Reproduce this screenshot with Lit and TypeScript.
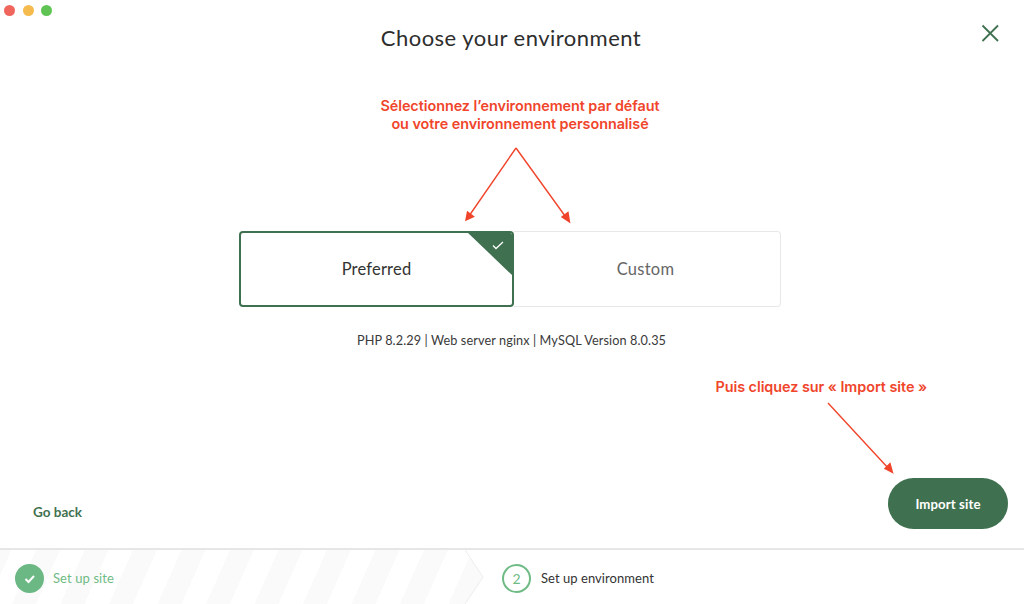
import { LitElement, html, css } from "lit";
import { customElement } from "lit/decorators.js";

@customElement("app-root")
export class AppRoot extends LitElement {
  static styles = css`
    :host {
      display: flex;
      flex-direction: column;
      width: 1024px;
      height: 604px;
      position: relative;
      overflow: hidden;
      background: #fff;
      color: #333;
      font-family: Lato, "Open Sans", sans-serif;
    }
    .lights { position: absolute; left: 4px; top: 5px; display: flex; gap: 7.5px; }
    .light { width: 11px; height: 11px; border-radius: 50%; }
    .red { background: #f0665c; }
    .yellow { background: #f6bb4f; }
    .green { background: #5fc454; }
    .close { position: absolute; left: 980px; top: 23px; width: 21px; height: 21px; }
    .arrows { position: absolute; left: 0; top: 0; width: 1024px; height: 604px; pointer-events: none; }

    main { flex: 1; display: flex; flex-direction: column; align-items: center; padding-right: 4px; min-height: 0; }
    h1 {
      margin: 24px 0 0 2px;
      font-size: 22px;
      line-height: 27px;
      font-weight: 400;
      letter-spacing: 0.48px;
      color: #2d2d2d;
    }
    .note {
      color: #f0452b;
      font-family: Inter, Lato, sans-serif;
      font-weight: 600;
      font-size: 14.4px;
      line-height: 18px;
      letter-spacing: -0.05px;
      text-align: center;
    }
    .note.top { margin: 46px 0 0 20px; }
    .cards { display: flex; margin-top: 98px; width: 542px; height: 76px; }
    .card {
      flex: 1;
      position: relative;
      display: flex;
      align-items: center;
      justify-content: center;
      box-sizing: border-box;
      font-size: 16.5px;
      letter-spacing: 0.2px;
      border-radius: 4px;
    }
    .card.on { flex: 0 0 275px; border: 2px solid #3f7150; color: #333; z-index: 1; overflow: hidden; }
    .card.off { border: 1px solid #e8e8e8; border-left: 0; color: #666; border-radius: 0 4px 4px 0; padding-right: 3px; letter-spacing: 0.25px; }
    .corner { position: absolute; right: -2px; top: -2px; width: 48px; height: 46px; }
    .info { margin: 25px 0 0 3px; font-size: 12.7px; line-height: 16px; letter-spacing: 0.1px; color: #3a3a3a; }
    .foot-note { align-self: flex-end; margin: 30px 93px 0 0; }
    .actions {
      align-self: stretch;
      margin-right: -4px;
      padding: 0 16px 0 33px;
      margin-top: 82px;
      display: flex;
      align-items: center;
      justify-content: space-between;
    }
    .back { font-size: 13.5px; font-weight: 700; color: #3f7150; padding-top: 17px; }
    .btn {
      width: 120px;
      height: 51px;
      border: 0;
      border-radius: 26px;
      background: #3f7150;
      color: #fff;
      font: 700 13.2px Lato, sans-serif;
      letter-spacing: 0.1px;
    }

    footer {
      height: 56px;
      box-sizing: border-box;
      border-top: 2px solid #e6e6e6;
      display: flex;
      position: relative;
      flex: none;
    }
    .step { display: flex; align-items: center; gap: 9px; font-size: 13px; letter-spacing: 0.1px; padding-top: 3px; box-sizing: border-box; }
    .label { padding-bottom: 2px; }
    .done {
      width: 483px;
      padding-left: 15px;
      color: #6fbb85;
      background: repeating-linear-gradient(114deg, #fafafa 0 10.5px, #fff 10.5px 32.9px, #fafafa 32.9px 44.3px);
      clip-path: polygon(0 0, 465px 0, 483px 50%, 465px 100%, 0 100%);
    }
    .chev { position: absolute; left: 465px; top: 0; width: 19px; height: 54px; }
    .num {
      width: 29px;
      height: 29px;
      box-sizing: border-box;
      border-radius: 50%;
      display: flex;
      align-items: center;
      justify-content: center;
    }
    .num.fill { background: #6bb884; }
    .num.ring { border: 2px solid #6fbb85; color: #6fbb85; font-size: 14px; }
    .current { padding-left: 19px; color: #333; gap: 10px; letter-spacing: 0.05px; }
  `;

  render() {
    return html`
      <div class="lights">
        <span class="light red"></span><span class="light yellow"></span><span class="light green"></span>
      </div>
      <svg class="close" viewBox="0 0 21 21" fill="none" stroke="#3f7150" stroke-width="1.8">
        <path d="M2.500 2.500 18 18M18 2.500 2.500 18" />
      </svg>
      <main>
        <h1>Choose your environment</h1>
        <div class="note top">Sélectionnez l’environnement par défaut<br />ou votre environnement personnalisé</div>
        <div class="cards">
          <div class="card on">
            Preferred
            <svg class="corner" viewBox="0 0 48 46">
              <path d="M0 0H45Q48 0 48 3V46Z" fill="#3f7150" />
              <path d="M27 14.500 30 17.500 37 11" fill="none" stroke="#fff" stroke-width="1.300" />
            </svg>
          </div>
          <div class="card off">Custom</div>
        </div>
        <div class="info">PHP 8.2.29 | Web server nginx | MySQL Version 8.0.35</div>
        <div class="note foot-note">Puis cliquez sur « Import site »</div>
        <div class="actions">
          <span class="back">Go back</span>
          <button class="btn">Import site</button>
        </div>
      </main>
      <footer>
        <div class="step done">
          <span class="num fill">
            <svg width="12" height="10" viewBox="0 0 12 10" fill="none" stroke="#fff" stroke-width="2">
              <path d="M1.500 5 4.500 8 10 2" />
            </svg>
          </span>
          <span class="label">Set up site</span>
        </div>
        <svg class="chev" viewBox="0 0 19 54" fill="none" stroke="#ececec">
          <path d="M0 0 18 27 0 54" />
        </svg>
        <div class="step current"><span class="num ring">2</span><span class="label">Set up environment</span></div>
      </footer>
      <svg class="arrows" viewBox="0 0 1024 604" fill="none" stroke="#f0452b" stroke-width="1.400">
        <path d="M516 148 469 216M516 148 566.500 218M828 403 889 469" />
        <path d="M466 220 467.500 212 473.500 216.500Z M569.500 222 562 217 568 212.500Z M892.500 472.500 885 468.500 890 463.500Z" fill="#f0452b" />
      </svg>
    `;
  }
}
